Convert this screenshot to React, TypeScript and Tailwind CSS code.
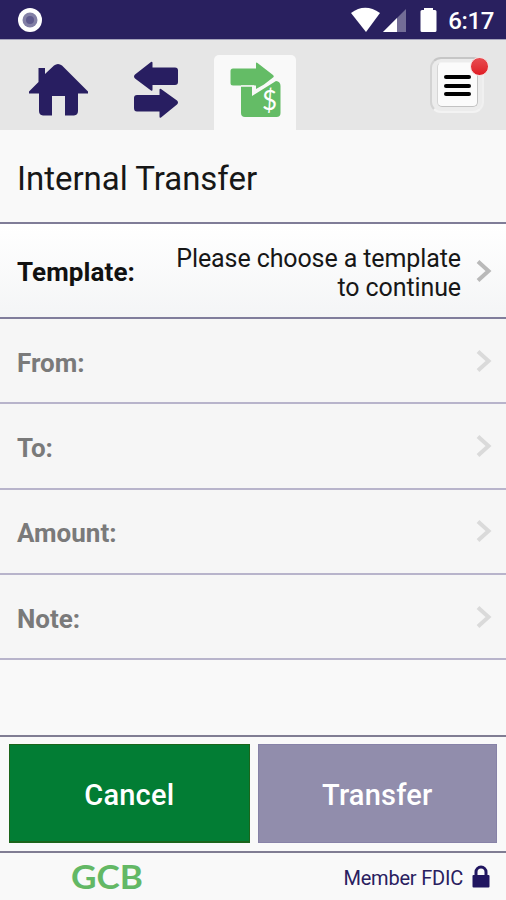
const FIELDS = ["From:", "To:", "Amount:", "Note:"];

function StatusBar() {
  return (
    <div className="flex h-10 shrink-0 items-start border-b border-[#a5a3bb] bg-[#29205f] pl-[18px] pr-3 text-white">
      <svg width="24" height="24" viewBox="0 0 24 24" className="mt-2">
        <circle cx="12" cy="12" r="12" fill="#fff" />
        <circle cx="12" cy="12" r="7.5" fill="#8380a6" />
        <circle cx="12" cy="12" r="4" fill="#5f5a8d" />
      </svg>
      <svg width="86" height="26" viewBox="0 0 86 26" className="ml-auto mt-[7px]" fill="#fff">
        <path d="M0 6Q14-4.500 29 6L15 25Z" />
        <path d="M55 2V25H32Z" opacity=".35" />
        <path d="M46 11V25H32Z" />
        <path d="M73 1h9v2h2q1.500 0 1.500 1.500V23.500q0 1.500-1.500 1.500H71q-1.500 0-1.500-1.500V4.500Q69.500 3 71 3h2Z" />
      </svg>
      <span className="ml-[11px] mt-[7px] text-[24px] font-medium leading-7 tracking-[-0.4px]">
        6:17
      </span>
    </div>
  );
}

function HomeIcon() {
  return (
    <svg width="60" height="54" viewBox="0 0 60 54" fill="#281e61">
      <path d="M10.500 5h6.500v6L26 2.500q4-3 8 0L60 28.500V30.500H50V48q0 4-4 4.500H37V33H24V52.500H15q-4-.5-4-4.500V30.500H1V28.500L10.500 19Z" />
    </svg>
  );
}

function ArrowsIcon() {
  return (
    <svg width="46" height="58" viewBox="0 0 46 58" fill="#281e61">
      <path d="M2 13.500 18 1q1.500-1 1.500 1V6.500H42q3 0 3 3V21q0 3-3 3H19.500v4.500q0 2-1.500 1L2 17.500q-2-2 0-4Z" />
      <path d="M44 39.500 28 28q-1.500-1-1.500 1v5H4q-3 0-3 3V47q0 3.500 3 3.500H26.500v5q0 2 1.500 1L44 43.500q2-2 0-4Z" />
    </svg>
  );
}

function PayIcon() {
  return (
    <svg width="52" height="58" viewBox="0 0 52 58">
      <path d="M46 19q4.500.5 4.500 5V51q0 4-4 4H15q-4 0-4-4V24H22V34L46 19Z" fill="#64bc66" />
      <path
        d="M3 6.500H26V1.500q0-1.500 1.500-.5L43 13Q44.500 14.500 43 15.500L34 22.500 26 27V23.500H3q-2.500 0-2.500-2.500V9Q.5 6.500 3 6.500Z"
        fill="#64bc66"
      />
      <path
        d="M11 24H23.500V31L27 28.500 45 17"
        fill="none"
        stroke="#f8f8f8"
        strokeWidth="1.500"
      />
      <path d="M22.500 24H26V28L23 31Z" fill="#f8f8f8" />
      <text
        x="39.500"
        y="48"
        textAnchor="middle"
        fontFamily="Lato, sans-serif"
        fontSize="26"
        fill="#fff"
      >
        $
      </text>
    </svg>
  );
}

function Chevron({ color }: { color: string }) {
  return (
    <svg width="16" height="24" viewBox="0 0 16 24" fill="none" className="shrink-0">
      <path d="M2 2.500 12.500 12 2 21.500" stroke={color} strokeWidth="4" />
    </svg>
  );
}

function LockIcon() {
  return (
    <svg width="18" height="23" viewBox="0 0 18 23">
      <path d="M4 12V7a5 5 0 0 1 10 0v5" fill="none" stroke="#211660" strokeWidth="3" />
      <rect x=".5" y="10" width="17" height="12.500" rx="1" fill="#211660" />
    </svg>
  );
}

function NavBar() {
  return (
    <nav className="flex h-[90px] shrink-0 items-start bg-[#e6e6e6]">
      <div className="ml-7 mt-[23px]">
        <HomeIcon />
      </div>
      <div className="ml-[45px] mt-[21px]">
        <ArrowsIcon />
      </div>
      <div className="ml-[35px] mt-[15px] h-[75px] w-[82px] rounded-t-[5px] bg-[#f9f9f9] pl-4 pt-[7px]">
        <PayIcon />
      </div>
      <button
        type="button"
        aria-label="Menu"
        className="relative ml-auto mr-[22px] mt-[17px] h-[56px] w-[54px] rounded-[11px] border-2 border-b-[#f3f3f3] border-l-[#d3d3d3] border-r-[#f0f0f0] border-t-[#c6c6c6] bg-[#ececec] pb-[4px] pl-[5px] pr-[4px] pt-[3px]"
      >
        <span className="flex h-full w-full flex-col items-center justify-center gap-[4.500px] rounded-[5px] border border-[#c2c2c2] border-l-[#d6d6d6] border-t-[#f4f4f4] bg-[#fbfbfb] pt-[2px]">
          <span className="h-1 w-[27px] rounded-full bg-black" />
          <span className="h-1 w-[27px] rounded-full bg-black" />
          <span className="h-1 w-[27px] rounded-full bg-black" />
        </span>
        <span className="absolute -right-[7px] -top-[2px] h-[19px] w-[19px] rounded-full border border-[#f7dede] bg-linear-to-b from-[#e84b50] to-[#df1822]" />
      </button>
    </nav>
  );
}

export default function App() {
  return (
    <div className="flex h-[900px] w-[506px] flex-col overflow-hidden bg-[#f9f9f9] font-[Roboto,sans-serif] text-[#171717]">
      <StatusBar />
      <NavBar />

      <h1 className="flex h-[94px] shrink-0 items-center border-b-2 border-[#807d98] pl-[17px] pt-[5px] text-[33px] tracking-[-0.02px]">
        Internal Transfer
      </h1>

      <div className="flex h-[95px] shrink-0 items-center border-b-2 border-[#807d9b] bg-linear-to-b from-white to-[#f4f5f6] pl-[17px] pr-[14px]">
        <span className="mt-1 text-[26px] font-bold tracking-[0.1px] text-[#111]">Template:</span>
        <span className="ml-auto mr-[15px] mt-1 w-[300px] text-right text-[25px] leading-[29px] tracking-[-0.1px]">
          Please choose a template to continue
        </span>
        <Chevron color="#b9b9b9" />
      </div>

      {FIELDS.map((label) => (
        <div
          key={label}
          className="flex h-[85.3px] shrink-0 items-center border-b-2 border-[#b8b4cb] bg-[#f6f6f6] pl-[17px] pr-[14px]"
        >
          <span className="mt-[5px] text-[26px] font-bold text-[#7a7a7a]">{label}</span>
          <span className="ml-auto">
            <Chevron color="#dadada" />
          </span>
        </div>
      ))}

      <div className="flex-1" />

      <div className="flex h-[118px] shrink-0 gap-2 border-y-2 border-[#807d93] px-[9px] pt-[7px] text-[29px] font-medium text-white">
        <button
          type="button"
          className="h-[99px] w-[241px] border border-b-2 border-[#1b651b] bg-[#027d34] pt-[5px] tracking-[0.2px]"
        >
          Cancel
        </button>
        <button
          type="button"
          className="h-[99px] w-[240px] border border-[#8782a7] bg-[#918dac] pt-1 tracking-[0.2px]"
        >
          Transfer
        </button>
      </div>

      <footer className="flex h-[47px] shrink-0 items-center pl-[71px] pr-4 text-[#29205f]">
        <svg width="74" height="44" viewBox="0 0 74 44">
          <text
            x="0"
            y="33.500"
            textLength="72"
            lengthAdjust="spacingAndGlyphs"
            fontFamily="Lato, sans-serif"
            fontSize="33"
            fontWeight="700"
            fill="#63b865"
          >
            GCB
          </text>
        </svg>
        <span className="ml-auto mr-[9px] pt-[2px] text-[20px] tracking-[-0.2px]">Member FDIC</span>
        <LockIcon />
      </footer>
    </div>
  );
}
